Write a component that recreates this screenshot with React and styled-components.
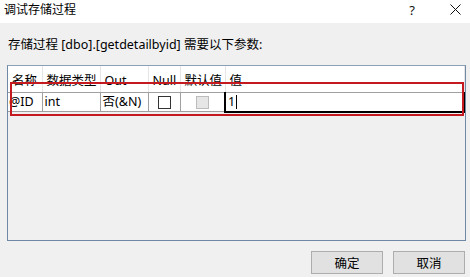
import React from "react";
import styled, { createGlobalStyle } from "styled-components";

const Global = createGlobalStyle`
  html, body { margin: 0; padding: 0; background: #f0f0f0; }
  body { font-family: "Noto Sans", "Noto Sans CJK SC", sans-serif; }
`;

const Window = styled.div`
  width: 470px;
  height: 277px;
  background: #f0f0f0;
  display: flex;
  flex-direction: column;
  position: relative;
  overflow: hidden;
  color: #000;
  font-family: "Noto Sans", "Noto Sans CJK SC", sans-serif;
`;

const TitleBar = styled.div`
  height: 23px;
  background: #fff;
  display: flex;
  align-items: center;
  padding-left: 4px;
  font-size: 12px;
`;

const Title = styled.div`
  flex: 1;
  line-height: 18px;
  margin-top: -3px;
`;

const HelpButton = styled.div`
  width: 22px;
  text-align: center;
  font-size: 13px;
  color: #111;
  margin-top: -4px;
  margin-right: 17px;
`;

const CloseButton = styled.div`
  width: 30px;
  height: 18px;
  display: flex;
  align-items: center;
  justify-content: center;
  margin-top: -4px;
`;

const Body = styled.div`
  flex: 1;
  display: flex;
  flex-direction: column;
  padding: 0 5px 0 7px;
`;

const Label = styled.div`
  margin-top: 13px;
  padding-left: 1px;
  font-size: 12.5px;
  line-height: 18px;
  height: 18px;
`;

const GridBox = styled.div`
  margin-top: 11px;
  width: 459px;
  height: 176px;
  box-sizing: border-box;
  border: 1px solid #6d89a6;
  border-top-color: #8aa0b8;
  background: #f0f0f0;
`;

const Table = styled.table`
  border-collapse: collapse;
  width: 457px;
  table-layout: fixed;
  font-size: 12.5px;
`;

const HeadCell = styled.th`
  height: 23px;
  padding: 3px 0 0 4px;
  text-align: left;
  font-weight: normal;
  background: #fff;
  border-right: 1px solid #e5e5e5;
  border-bottom: 1px solid #a0a0a0;
  white-space: nowrap;
  overflow: hidden;
  vertical-align: middle;
  line-height: 16px;
`;

const Cell = styled.td`
  height: 18px;
  padding: 0 0 0 ${(p) => p.$pad ?? 2}px;
  background: #fff;
  border-right: 1px solid #a0a0a0;
  border-bottom: 1px solid #a0a0a0;
  white-space: nowrap;
  overflow: hidden;
  text-align: ${(p) => (p.$center ? "center" : "left")};
  vertical-align: middle;
  line-height: 16px;
`;

const ValueCell = styled.td`
  height: 16px;
  padding: 0 0 0 2px;
  background: #fff;
  border: 2px solid #000;
  border-top: 1px solid #555;
  vertical-align: middle;
  line-height: 16px;
`;

const Caret = styled.span`
  display: inline-block;
  width: 1px;
  height: 14px;
  background: #000;
  vertical-align: middle;
  margin-left: 1px;
`;

const Box = styled.span`
  display: inline-block;
  width: 13px;
  height: 13px;
  box-sizing: border-box;
  border: 1px solid ${(p) => (p.$disabled ? "#bcbcbc" : "#333")};
  background: ${(p) => (p.$disabled ? "#e6e6e6" : "#fff")};
  vertical-align: middle;
  margin-top: -1px;
`;

const Highlight = styled.div`
  position: absolute;
  left: 10px;
  top: 82px;
  width: 454px;
  height: 34px;
  box-sizing: border-box;
  border: 2px solid #c4191e;
  pointer-events: none;
`;

const Footer = styled.div`
  display: flex;
  justify-content: flex-end;
  gap: 10px;
  margin-top: 10px;
`;

const Button = styled.button`
  width: 72px;
  height: 23px;
  box-sizing: border-box;
  background: #e1e1e1;
  border: 1px solid #adadad;
  font-family: "Noto Sans CJK SC", sans-serif;
  font-size: 12.5px;
  color: #000;
  padding: 0;
  line-height: 20px;
`;

export default function App() {
  return (
    <>
      <Global />
      <Window>
        <TitleBar>
          <Title>调试存储过程</Title>
          <HelpButton>?</HelpButton>
          <CloseButton>
            <svg width="11" height="11" viewBox="0 0 11 11">
              <path d="M0.5 0.5 L10.5 10.5 M10.5 0.5 L0.5 10.5" stroke="#111" strokeWidth="1" fill="none" />
            </svg>
          </CloseButton>
        </TitleBar>
        <Body>
          <Label>存储过程 [dbo].[getdetailbyid] 需要以下参数:</Label>
          <GridBox>
            <Table>
              <colgroup>
                <col style={{ width: 34 }} />
                <col style={{ width: 58 }} />
                <col style={{ width: 48 }} />
                <col style={{ width: 32 }} />
                <col style={{ width: 45 }} />
                <col />
              </colgroup>
              <thead>
                <tr>
                  <HeadCell>名称</HeadCell>
                  <HeadCell>数据类型</HeadCell>
                  <HeadCell>Out</HeadCell>
                  <HeadCell>Null</HeadCell>
                  <HeadCell>默认值</HeadCell>
                  <HeadCell>值</HeadCell>
                </tr>
              </thead>
              <tbody>
                <tr>
                  <Cell $pad={1}>@ID</Cell>
                  <Cell>int</Cell>
                  <Cell>否(&amp;N)</Cell>
                  <Cell $center $pad={0}><Box /></Cell>
                  <Cell $center $pad={0}><Box $disabled /></Cell>
                  <ValueCell>1<Caret /></ValueCell>
                </tr>
              </tbody>
            </Table>
          </GridBox>
          <Footer>
            <Button>确定</Button>
            <Button>取消</Button>
          </Footer>
        </Body>
        <Highlight />
      </Window>
    </>
  );
}
